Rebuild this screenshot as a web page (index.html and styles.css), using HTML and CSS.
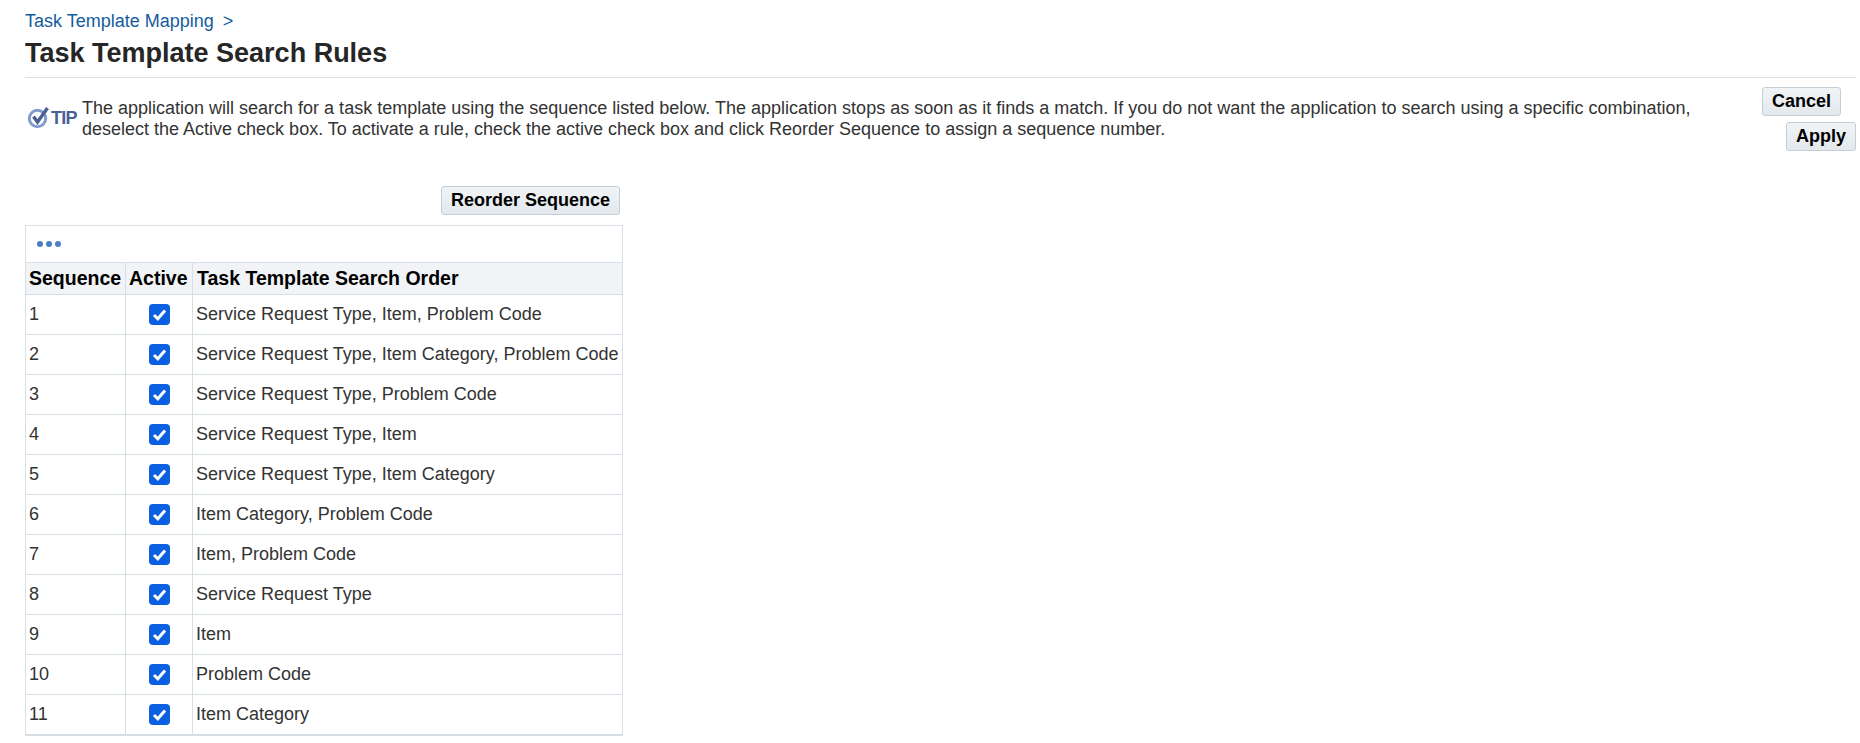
FILE: index.html
```html
<!DOCTYPE html>
<html lang="en">
<head>
  <meta charset="UTF-8" />
  <title>Task Template Search Rules</title>
  <link rel="stylesheet" href="styles.css">
</head>
<body>
  <div class="crumbs"><a href="#">Task Template Mapping</a><span class="crumb-sep">&gt;</span></div>
  <h1>Task Template Search Rules</h1>

  <div class="tip-row">
    <svg class="tip-check" width="24" height="24" viewBox="0 0 24 24">
      <circle cx="10.5" cy="13.5" r="8.2" fill="none" stroke="#7f9ccb" stroke-width="3"/>
      <path d="M6.5 11.5l4 5.5L20.5 3" fill="none" stroke="#4a5f95" stroke-width="3.4"/>
    </svg>
    <span class="tip-label">TIP</span>
    <p class="tip-text">The application will search for a task template using the sequence listed below. The application stops as soon as it finds a match. If you do not want the application to search using a specific combination, deselect the Active check box. To activate a rule, check the active check box and click Reorder Sequence to assign a sequence number.</p>
    <div class="actions">
      <button class="btn btn-cancel">Cancel</button>
      <button class="btn">Apply</button>
    </div>
  </div>

  <div class="panel">
    <div class="panel-bar"><button class="btn">Reorder Sequence</button></div>
    <div class="toolbar"><span class="dot"></span><span class="dot"></span><span class="dot"></span></div>
    <table>
      <thead>
        <tr><th class="col-seq">Sequence</th><th class="col-active">Active</th><th class="col-order">Task Template Search Order</th></tr>
      </thead>
      <tbody>
        <tr><td>1</td><td class="check"><span class="box"><svg viewBox="0 0 21 21"><path d="M5 11l3.8 3.8L16 6.5"/></svg></span></td><td>Service Request Type, Item, Problem Code</td></tr>
        <tr><td>2</td><td class="check"><span class="box"><svg viewBox="0 0 21 21"><path d="M5 11l3.8 3.8L16 6.5"/></svg></span></td><td>Service Request Type, Item Category, Problem Code</td></tr>
        <tr><td>3</td><td class="check"><span class="box"><svg viewBox="0 0 21 21"><path d="M5 11l3.8 3.8L16 6.5"/></svg></span></td><td>Service Request Type, Problem Code</td></tr>
        <tr><td>4</td><td class="check"><span class="box"><svg viewBox="0 0 21 21"><path d="M5 11l3.8 3.8L16 6.5"/></svg></span></td><td>Service Request Type, Item</td></tr>
        <tr><td>5</td><td class="check"><span class="box"><svg viewBox="0 0 21 21"><path d="M5 11l3.8 3.8L16 6.5"/></svg></span></td><td>Service Request Type, Item Category</td></tr>
        <tr><td>6</td><td class="check"><span class="box"><svg viewBox="0 0 21 21"><path d="M5 11l3.8 3.8L16 6.5"/></svg></span></td><td>Item Category, Problem Code</td></tr>
        <tr><td>7</td><td class="check"><span class="box"><svg viewBox="0 0 21 21"><path d="M5 11l3.8 3.8L16 6.5"/></svg></span></td><td>Item, Problem Code</td></tr>
        <tr><td>8</td><td class="check"><span class="box"><svg viewBox="0 0 21 21"><path d="M5 11l3.8 3.8L16 6.5"/></svg></span></td><td>Service Request Type</td></tr>
        <tr><td>9</td><td class="check"><span class="box"><svg viewBox="0 0 21 21"><path d="M5 11l3.8 3.8L16 6.5"/></svg></span></td><td>Item</td></tr>
        <tr><td>10</td><td class="check"><span class="box"><svg viewBox="0 0 21 21"><path d="M5 11l3.8 3.8L16 6.5"/></svg></span></td><td>Problem Code</td></tr>
        <tr><td>11</td><td class="check"><span class="box"><svg viewBox="0 0 21 21"><path d="M5 11l3.8 3.8L16 6.5"/></svg></span></td><td>Item Category</td></tr>
      </tbody>
    </table>
  </div>
</body>
</html>
```

FILE: styles.css
```css
body {
  margin: 0;
  padding: 0 4px 0 25px;
  background: #fff;
  font-family: 'Liberation Sans', Arial, sans-serif;
  font-size: 18px;
  color: #333;
  overflow: hidden;
}

.crumbs {
  padding-top: 11px;
  line-height: 20px;
}

.crumbs a {
  color: #145c9e;
  text-decoration: none;
}

.crumb-sep {
  margin-left: 9px;
  color: #145c9e;
}

h1 {
  margin: 6px 0 0;
  padding-bottom: 8px;
  border-bottom: 1px solid #d6dfe6;
  font-size: 27px;
  line-height: 32px;
  color: #262626;
}

.tip-row {
  display: flex;
  align-items: flex-start;
  padding-top: 9px;
}

.tip-check {
  flex: none;
  margin: 18px 0 0 2px;
}

.tip-label {
  flex: none;
  width: 26px;
  margin-top: 21px;
  font-size: 18px;
  font-weight: bold;
  line-height: 21px;
  letter-spacing: -0.8px;
  color: #4a5f95;
}

.tip-text {
  flex: 1;
  margin: 11px 55px 0 5px;
  line-height: 21px;
}

.actions {
  flex: none;
  width: 94px;
  display: flex;
  flex-direction: column;
  align-items: flex-end;
  gap: 6px;
}

.btn {
  height: 29px;
  padding: 0 9px;
  border: 1px solid #c4ced7;
  border-radius: 3px;
  background: linear-gradient(to bottom, #f1f4f6, #e3e8ec);
  font-family: inherit;
  font-size: 18px;
  font-weight: bold;
  color: #000;
}

.btn-cancel {
  margin-right: 15px;
}

.panel {
  width: 598px;
  margin-top: 35px;
}

.panel-bar {
  display: flex;
  justify-content: flex-end;
  padding-right: 3px;
  margin-bottom: 10px;
}

.toolbar {
  display: flex;
  align-items: center;
  gap: 3px;
  height: 36px;
  padding-left: 11px;
  border: 1px solid #d6dfe6;
  border-bottom: none;
}

.dot {
  width: 6px;
  height: 6px;
  border-radius: 50%;
  background: #4a7fc4;
}

table {
  width: 100%;
  table-layout: fixed;
  border-collapse: collapse;
  border-bottom: 2px solid #d6dfe6;
}

th, td {
  border: 1px solid #d6dfe6;
  padding: 0 3px;
  text-align: left;
  white-space: nowrap;
}

th {
  height: 31px;
  background: #f1f3f7;
  font-size: 19.5px;
  color: #000;
}

td {
  height: 39px;
}

.col-seq {
  width: 93px;
}

.col-active {
  width: 60px;
}

.col-order {
  padding-left: 4px;
}

.check {
  text-align: center;
}

.box {
  display: inline-block;
  width: 21px;
  height: 21px;
  border-radius: 4px;
  background: #0a60e0;
  vertical-align: middle;
}

.box svg {
  display: block;
}

.box path {
  fill: none;
  stroke: #fff;
  stroke-width: 3;
}
```
